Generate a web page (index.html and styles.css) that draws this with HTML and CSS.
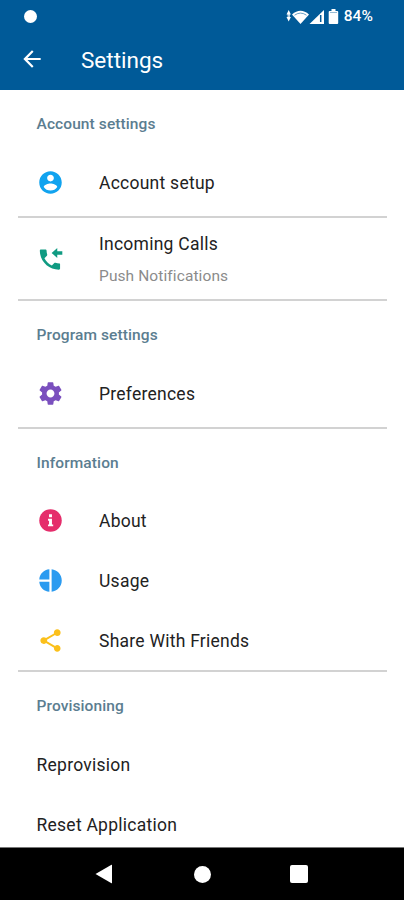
FILE: index.html
```
<!DOCTYPE html>
<html lang="en">
<head>
<meta charset="utf-8">
<title>Settings</title>
<link rel="stylesheet" href="styles.css">
</head>
<body>
<div class="screen">
  <header class="top">
    <div class="status">
      <span class="dot"></span>
      <div class="status-right">
        <svg class="status-icons" width="72" height="20" viewBox="0 0 72 20" fill="#fff">
          <path d="M1.500 8.500 3.700 4l2.200 4.500zM1.500 11h4.400l-2.200 4.500z"/><path d="M2.500 8h2.500v4H2.500z" opacity=".7"/>
          <path d="M7 8.500Q15.500 1 24 8.500L15.500 18z"/>
          <path d="M9.500 9.200Q15.500 5 21.500 9.200" fill="none" stroke="#005a98" stroke-width=".9" opacity=".65"/>
          <path d="M24.500 18 39 4v14z"/>
          <path d="M35.700 9v7" stroke="#005a98" stroke-width="1.500"/>
          <path d="M46.500 3h4v2h1.700q1 0 1 1v11q0 1-1 1h-7.500q-1 0-1-1V6q0-1 1-1h1.800z"/>
          <path d="M45 6.500h7" stroke="#005a98" stroke-width=".8" opacity=".5"/>
        </svg>
        <span class="percent">84%</span>
      </div>
    </div>
    <div class="appbar">
      <svg class="back" width="26" height="26" viewBox="0 0 24 24" fill="#fff"><path d="M20 11H7.830l5.590-5.590L12 4l-8 8 8 8 1.410-1.410L7.830 13H20z"/></svg>
      <h1>Settings</h1>
    </div>
  </header>
  <main>
    <section>
      <h2>Account settings</h2>
      <div class="item">
        <svg class="icon" viewBox="0 0 24 24" fill="#11a3ef"><path d="M12 2C6.480 2 2 6.480 2 12s4.480 10 10 10 10-4.480 10-10S17.520 2 12 2zm0 3c1.660 0 3 1.340 3 3s-1.340 3-3 3-3-1.340-3-3 1.340-3 3-3zm0 14.200c-2.500 0-4.710-1.280-6-3.220.030-1.990 4-3.080 6-3.080 1.990 0 5.970 1.090 6 3.080-1.290 1.940-3.500 3.220-6 3.220z"/></svg>
        <span>Account setup</span>
      </div>
    </section>
    <section class="calls">
      <div class="item tall">
        <svg class="icon" viewBox="0 0 24 24" fill="#109b82"><path d="M20 15.500c-1.250 0-2.450-.2-3.570-.57-.350-.110-.740-.030-1.020.240l-2.200 2.200c-2.830-1.440-5.150-3.750-6.590-6.580l2.200-2.210c.280-.270.360-.660.250-1.010C8.700 6.450 8.500 5.250 8.500 4c0-.550-.450-1-1-1H3.500c-.550 0-1 .450-1 1 0 9.390 7.610 17 17 17 .550 0 1-.450 1-1v-3.500c0-.550.050-1-.5-1z"/><path d="M13 6.200 18 1.800v2.900h4.500v3H18v2.900z"/></svg>
        <div class="lines"><span>Incoming Calls</span><small>Push Notifications</small></div>
      </div>
    </section>
    <section>
      <h2>Program settings</h2>
      <div class="item">
        <svg class="icon" viewBox="0 0 24 24" fill="#7a4fbe"><path d="M19.430 12.980c.040-.320.070-.640.070-.980s-.030-.660-.070-.980l2.110-1.650c.190-.150.240-.420.120-.640l-2-3.460c-.120-.220-.390-.300-.610-.220l-2.490 1c-.520-.400-1.080-.730-1.690-.980l-.380-2.650C14.460 2.180 14.250 2 14 2h-4c-.250 0-.460.180-.490.420l-.380 2.650c-.610.250-1.170.590-1.690.980l-2.490-1c-.230-.090-.490 0-.610.220l-2 3.460c-.130.220-.070.490.120.640l2.110 1.650c-.040.320-.070.650-.070.980s.030.660.070.980l-2.110 1.650c-.190.150-.240.420-.120.640l2 3.460c.120.220.390.300.610.220l2.490-1c.520.400 1.080.730 1.690.980l.380 2.650c.030.240.240.420.490.420h4c.250 0 .460-.180.490-.420l.380-2.650c.610-.250 1.170-.590 1.690-.980l2.490 1c.230.090.490 0 .610-.220l2-3.460c.120-.220.070-.490-.120-.640l-2.110-1.650zM12 15.500c-1.930 0-3.500-1.570-3.500-3.500s1.570-3.500 3.500-3.500 3.500 1.570 3.500 3.500-1.570 3.500-3.500 3.500z"/></svg>
        <span>Preferences</span>
      </div>
    </section>
    <section class="info">
      <h2>Information</h2>
      <div class="item">
        <svg class="icon" viewBox="0 0 24 24"><circle cx="12" cy="12" r="10" fill="#e52d6b"/><path d="M10.700 6.500h2.600V9h-2.600zM9.800 10.500h3.500v5h1.100v1.700H9.800v-1.700h.9v-3.300h-.9z" fill="#fff"/></svg>
        <span>About</span>
      </div>
      <div class="item">
        <svg class="icon" viewBox="0 0 24 24" fill="#2b9bf0"><path d="M11 2v9H2c.470-5 4-8.500 9-9zM13 2v20c5.050-.500 9-4.760 9-10s-3.950-9.500-9-10zM2 13h9v9c-5-.500-8.530-4-9-9z"/></svg>
        <span>Usage</span>
      </div>
      <div class="item">
        <svg class="icon" viewBox="0 0 24 24" fill="#fbc01b"><path d="M18 16.080c-.760 0-1.440.300-1.960.770L8.910 12.700c.050-.230.090-.460.090-.7s-.040-.470-.090-.7l7.050-4.110c.540.500 1.250.810 2.040.810 1.660 0 3-1.340 3-3s-1.340-3-3-3-3 1.340-3 3c0 .240.040.470.090.7L8.040 9.810C7.500 9.310 6.790 9 6 9c-1.660 0-3 1.340-3 3s1.340 3 3 3c.790 0 1.500-.310 2.040-.810l7.120 4.160c-.050.210-.080.430-.080.650 0 1.610 1.310 2.920 2.920 2.920s2.920-1.310 2.920-2.920-1.310-2.920-2.920-2.920z"/></svg>
        <span>Share With Friends</span>
      </div>
    </section>
    <section class="last">
      <h2>Provisioning</h2>
      <div class="item"><span>Reprovision</span></div>
      <div class="item"><span>Reset Application</span></div>
    </section>
  </main>
  <nav>
    <svg width="18" height="20" viewBox="0 0 18 20" fill="#fff"><path d="M.5 10 16.500.700q.500-.200.500.400v17.800q0 .600-.500.400z"/></svg>
    <span class="home"></span>
    <span class="recent"></span>
  </nav>
</div>
</body>
</html>
```
FILE: styles.css
```
* { box-sizing: border-box; }
body { margin: 0; font-family: Roboto, sans-serif; background: #fff; color: #222; }
.screen { width: 404px; height: 900px; display: flex; flex-direction: column; overflow: hidden; }
.top { flex: none; height: 90px; background: #005a98; color: #fff; }
.status { height: 32px; display: flex; align-items: center; justify-content: space-between; padding: 0 31px 0 24px; }
.dot { width: 13px; height: 13px; border-radius: 50%; background: #fff; }
.status-right { display: flex; align-items: center; }
.status-icons { flex: none; margin-right: -13px; }
.percent { font-size: 15.5px; font-weight: 500; letter-spacing: 0.1px; }
.appbar { height: 56px; display: flex; align-items: center; padding-left: 19px; }
.back { flex: none; margin-top: -3px; }
h1 { margin: 0 0 0 36px; font-size: 22.5px; font-weight: 400; letter-spacing: 0; }
main { flex: 1; min-height: 0; overflow: hidden; }
section { margin: 0 17px 0 18px; height: 128px; border-bottom: 2px solid #d2d2d2; }
.calls { height: 83px; }
.info { height: 243px; }
.item { height: 60px; display: flex; align-items: center; padding-left: 18.5px; font-size: 17.5px; letter-spacing: 0.25px; }
h2 { margin: 0; height: 63px; padding: 5px 0 0 18.5px; display: flex; align-items: center; font-size: 15.5px; font-weight: 500; letter-spacing: 0.1px; color: #5b7d90; }
.info h2 { height: 62px; }
.last { height: auto; border: 0; }
.icon { flex: none; width: 27px; height: 27px; margin: -2px 35.5px 0 0; }
.tall { height: 83px; }
.tall .icon { margin-top: 0; }
.lines { display: flex; flex-direction: column; gap: 12px; line-height: 20px; }
small { font-size: 15.5px; letter-spacing: 0.1px; color: #8b8b8b; }
nav { flex: none; height: 53px; background: #000; display: flex; align-items: center; padding-left: 95px; border-top: 1px solid #777; }
.home { width: 17px; height: 17px; border-radius: 50%; background: #fff; margin-left: 81px; }
.recent { width: 18px; height: 18px; border-radius: 2px; background: #fff; margin-left: 79px; }
```
